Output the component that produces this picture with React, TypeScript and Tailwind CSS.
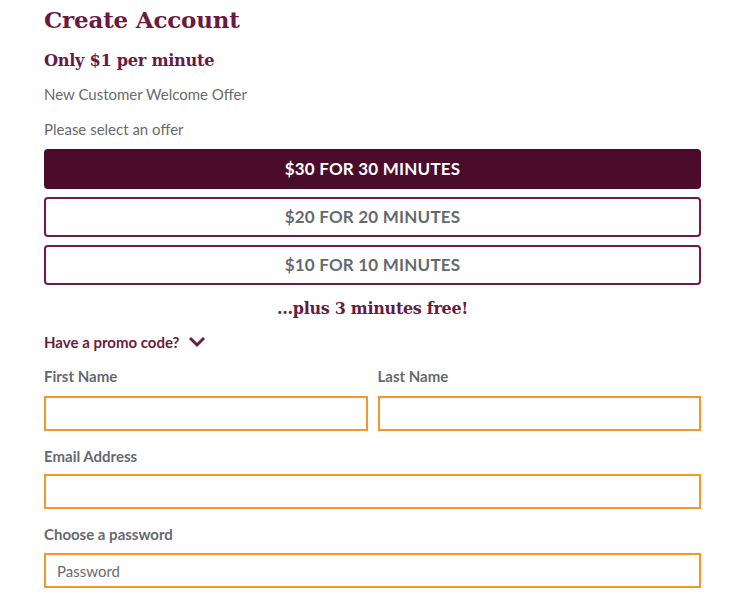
import React from "react";

const sans = { fontFamily: "Lato, 'Open Sans', sans-serif" };
const serif = { fontFamily: "'DejaVu Serif', 'Liberation Serif', serif" };

export default function App() {
  return (
    <div className="w-[751px] h-[596px] bg-white overflow-hidden" style={sans}>
      <div className="ml-[44px] w-[657px] flex flex-col">
        <h1 className="text-[23px] leading-[28px] mt-[6px] font-bold text-[#6a1a42] tracking-[-0.2px]" style={serif}>
          Create Account
        </h1>
        <h2 className="text-[16.2px] leading-[22px] mt-[16px] font-bold text-[#6a1a42] tracking-[-0.3px]" style={serif}>
          Only $1 per minute
        </h2>
        <p className="text-[15px] leading-[18px] mt-[13px] text-[#6b6b6b]">New Customer Welcome Offer</p>
        <p className="text-[15px] leading-[18px] mt-[17px] text-[#6b6b6b]">Please select an offer</p>
        <div className="flex flex-col gap-[8px] mt-[11px]">
          <button className="h-[40px] rounded-[4px] bg-[#4a0c2a] text-white text-[17px] font-bold tracking-[0.2px]">
            $30 FOR 30 MINUTES
          </button>
          <button className="h-[40px] rounded-[4px] border-2 border-[#761846] bg-white text-[#666a70] text-[17px] font-bold tracking-[0.2px]">
            $20 FOR 20 MINUTES
          </button>
          <button className="h-[40px] rounded-[4px] border-2 border-[#761846] bg-white text-[#666a70] text-[17px] font-bold tracking-[0.2px]">
            $10 FOR 10 MINUTES
          </button>
        </div>
        <p className="text-center text-[16px] leading-[22px] mt-[13px] font-bold text-[#6a1a42] tracking-[-0.3px]" style={serif}>
          ...plus 3 minutes free!
        </p>
        <div className="flex items-center gap-[10px] mt-[13px] text-[15px] leading-[18px] font-bold text-[#6a1a42]">
          <span>Have a promo code?</span>
          <svg width="16" height="12" viewBox="0 0 16 12" fill="none">
            <path d="M2 3 L8 9 L14 3" stroke="#6a1a42" strokeWidth="3" strokeLinecap="square" />
          </svg>
        </div>
        <div className="grid grid-cols-2 gap-[10px] mt-[16px]">
          <div className="flex flex-col">
            <label className="text-[15px] leading-[18px] font-bold text-[#666a70]">First Name</label>
            <input className="mt-[11px] h-[35px] border-2 border-[#f3962b] outline-none px-[12px]" />
          </div>
          <div className="flex flex-col">
            <label className="text-[15px] leading-[18px] font-bold text-[#666a70]">Last Name</label>
            <input className="mt-[11px] h-[35px] border-2 border-[#f3962b] outline-none px-[12px]" />
          </div>
        </div>
        <label className="mt-[16px] text-[15px] leading-[18px] font-bold text-[#666a70]">Email Address</label>
        <input className="mt-[9px] h-[35px] border-2 border-[#f3962b] outline-none px-[12px]" />
        <label className="mt-[16px] text-[15px] leading-[18px] font-bold text-[#666a70]">Choose a password</label>
        <input
          type="password"
          placeholder="Password"
          className="mt-[10px] h-[35px] border-2 border-[#f3962b] outline-none px-[11px] text-[15px] placeholder:text-[#6b6b6b]"
          style={sans}
        />
      </div>
    </div>
  );
}
